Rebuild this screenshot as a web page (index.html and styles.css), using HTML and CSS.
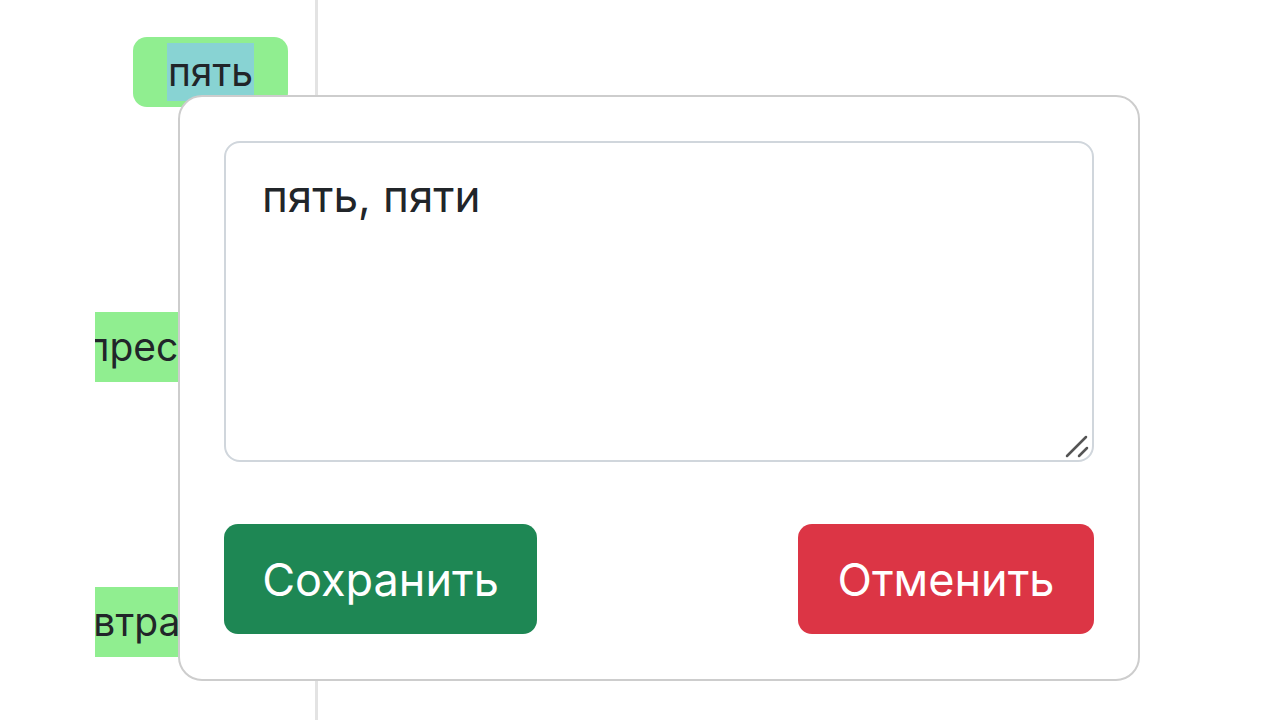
FILE: index.html
```html
<!DOCTYPE html>
<html lang="ru">
<head>
    <meta charset="UTF-8">
    <meta name="viewport" content="width=device-width, initial-scale=1.0">
    <title>Выравнивание</title>
    <link rel="stylesheet" href="styles.css">
</head>
<body>
    <div class="page">
        <div class="column">
            <div class="words">
                <div class="row">
                    <span class="chip"><span class="mark">пять</span></span>
                </div>
                <div class="row">
                    <span class="chip">прессом</span>
                </div>
                <div class="row">
                    <span class="chip">завтраком</span>
                </div>
            </div>
        </div>
        <div class="column-right"></div>
    </div>

    <div class="popup">
        <div class="field">
            <textarea class="edit" rows="4">пять, пяти</textarea>
            <svg class="grip" width="24" height="24" viewBox="0 0 24 24">
                <line x1="2" y1="22" x2="21" y2="3" stroke="#555" stroke-width="2.5" stroke-linecap="round"/>
                <line x1="14" y1="22" x2="22" y2="14" stroke="#555" stroke-width="2.5" stroke-linecap="round"/>
            </svg>
        </div>
        <div class="actions">
            <button class="btn btn-save">Сохранить</button>
            <button class="btn btn-cancel">Отменить</button>
        </div>
    </div>
</body>
</html>
```

FILE: styles.css
```css
body {
    font-family: Inter, "Noto Sans", sans-serif;
    background-color: white;
    color: #212529;
    margin: 0;
    padding: 0;
}
.page {
    display: flex;
    height: 720px;
}
.column {
    width: 318px;
    border-right: 3px solid #e3e3e3;
    padding-left: 95px;
    box-sizing: border-box;
}
.words {
    overflow: hidden;
    height: 100%;
    padding-top: 37px;
    box-sizing: border-box;
}
.row {
    display: flex;
    justify-content: flex-end;
    padding-right: 27px;
    height: 70px;
    margin-bottom: 205px;
}
.chip {
    display: inline-block;
    background-color: #90ee90;
    border-radius: 14px;
    padding: 6px 34px;
    font-size: 39px;
    line-height: 58px;
    white-space: nowrap;
}
.mark {
    display: inline-block;
    background-color: #88d3d3;
    padding: 0 1px;
}
.popup {
    position: absolute;
    left: 178px;
    top: 95px;
    width: 962px;
    height: 586px;
    box-sizing: border-box;
    background: white;
    border: 2px solid #cdcdcd;
    border-radius: 24px;
    padding: 44px 44px;
}
.field {
    position: relative;
}
.edit {
    display: block;
    width: 870px;
    height: 321px;
    box-sizing: border-box;
    border: 2px solid #d0d6dc;
    border-radius: 16px;
    padding: 20px 36px;
    font-family: inherit;
    font-size: 44px;
    line-height: 1.5;
    color: #212529;
    resize: none;
    outline: none;
}
.grip {
    position: absolute;
    right: 5px;
    bottom: 4px;
}
.actions {
    display: flex;
    justify-content: space-between;
    margin-top: 62px;
}
.btn {
    height: 110px;
    padding: 0;
    border: none;
    border-radius: 14px;
    color: white;
    font-family: inherit;
    font-size: 45px;
    cursor: pointer;
}
.btn-save {
    width: 313px;
    background-color: #1e8754;
}
.btn-cancel {
    width: 296px;
    background-color: #dc3545;
}
```
